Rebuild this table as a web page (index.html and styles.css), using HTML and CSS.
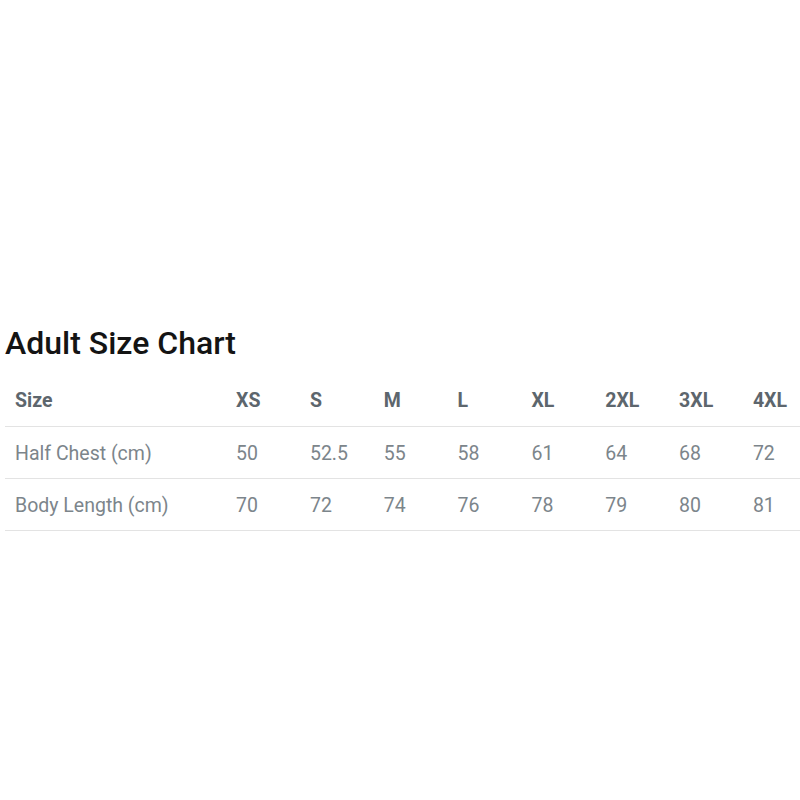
FILE: index.html
```html
<!DOCTYPE html>
<html>
<head>
<meta charset="utf-8">
<link rel="stylesheet" href="styles.css">
</head>
<body>
<div class="page">
  <h2 class="title">Adult Size Chart</h2>
  <table class="chart">
    <colgroup>
      <col class="c-label">
      <col class="c-size"><col class="c-size"><col class="c-size"><col class="c-size">
      <col class="c-size"><col class="c-size"><col class="c-size"><col class="c-last">
    </colgroup>
    <thead>
      <tr><th>Size</th><th>XS</th><th>S</th><th>M</th><th>L</th><th>XL</th><th>2XL</th><th>3XL</th><th>4XL</th></tr>
    </thead>
    <tbody>
      <tr><td>Half Chest (cm)</td><td>50</td><td>52.5</td><td>55</td><td>58</td><td>61</td><td>64</td><td>68</td><td>72</td></tr>
      <tr><td>Body Length (cm)</td><td>70</td><td>72</td><td>74</td><td>76</td><td>78</td><td>79</td><td>80</td><td>81</td></tr>
    </tbody>
  </table>
</div>
</body>
</html>
```
FILE: styles.css
```css
html, body {
  margin: 0;
  padding: 0;
  background: #ffffff;
  overflow: hidden;
}
.page {
  padding: 323px 0 0 5px;
  font-family: Roboto, "Liberation Sans", sans-serif;
}
.title {
  margin: 0;
  height: 40px;
  line-height: 40px;
  font-size: 32px;
  font-weight: 500;
  color: #141414;
}
.chart {
  margin-top: 11px;
  border-collapse: collapse;
  table-layout: fixed;
  width: 795px;
}
.c-label { width: 221px; }
.c-size { width: 73.8px; }
.c-last { width: 57px; }
.chart th, .chart td {
  box-sizing: border-box;
  height: 52px;
  padding: 2px 0 0 10px;
  text-align: left;
  border-bottom: 1px solid #e3e3e3;
  font-size: 19.5px;
  white-space: nowrap;
}
.chart th {
  font-weight: 700;
  color: #5d666d;
}
.chart td {
  font-weight: 400;
  color: #7c858b;
}
```
